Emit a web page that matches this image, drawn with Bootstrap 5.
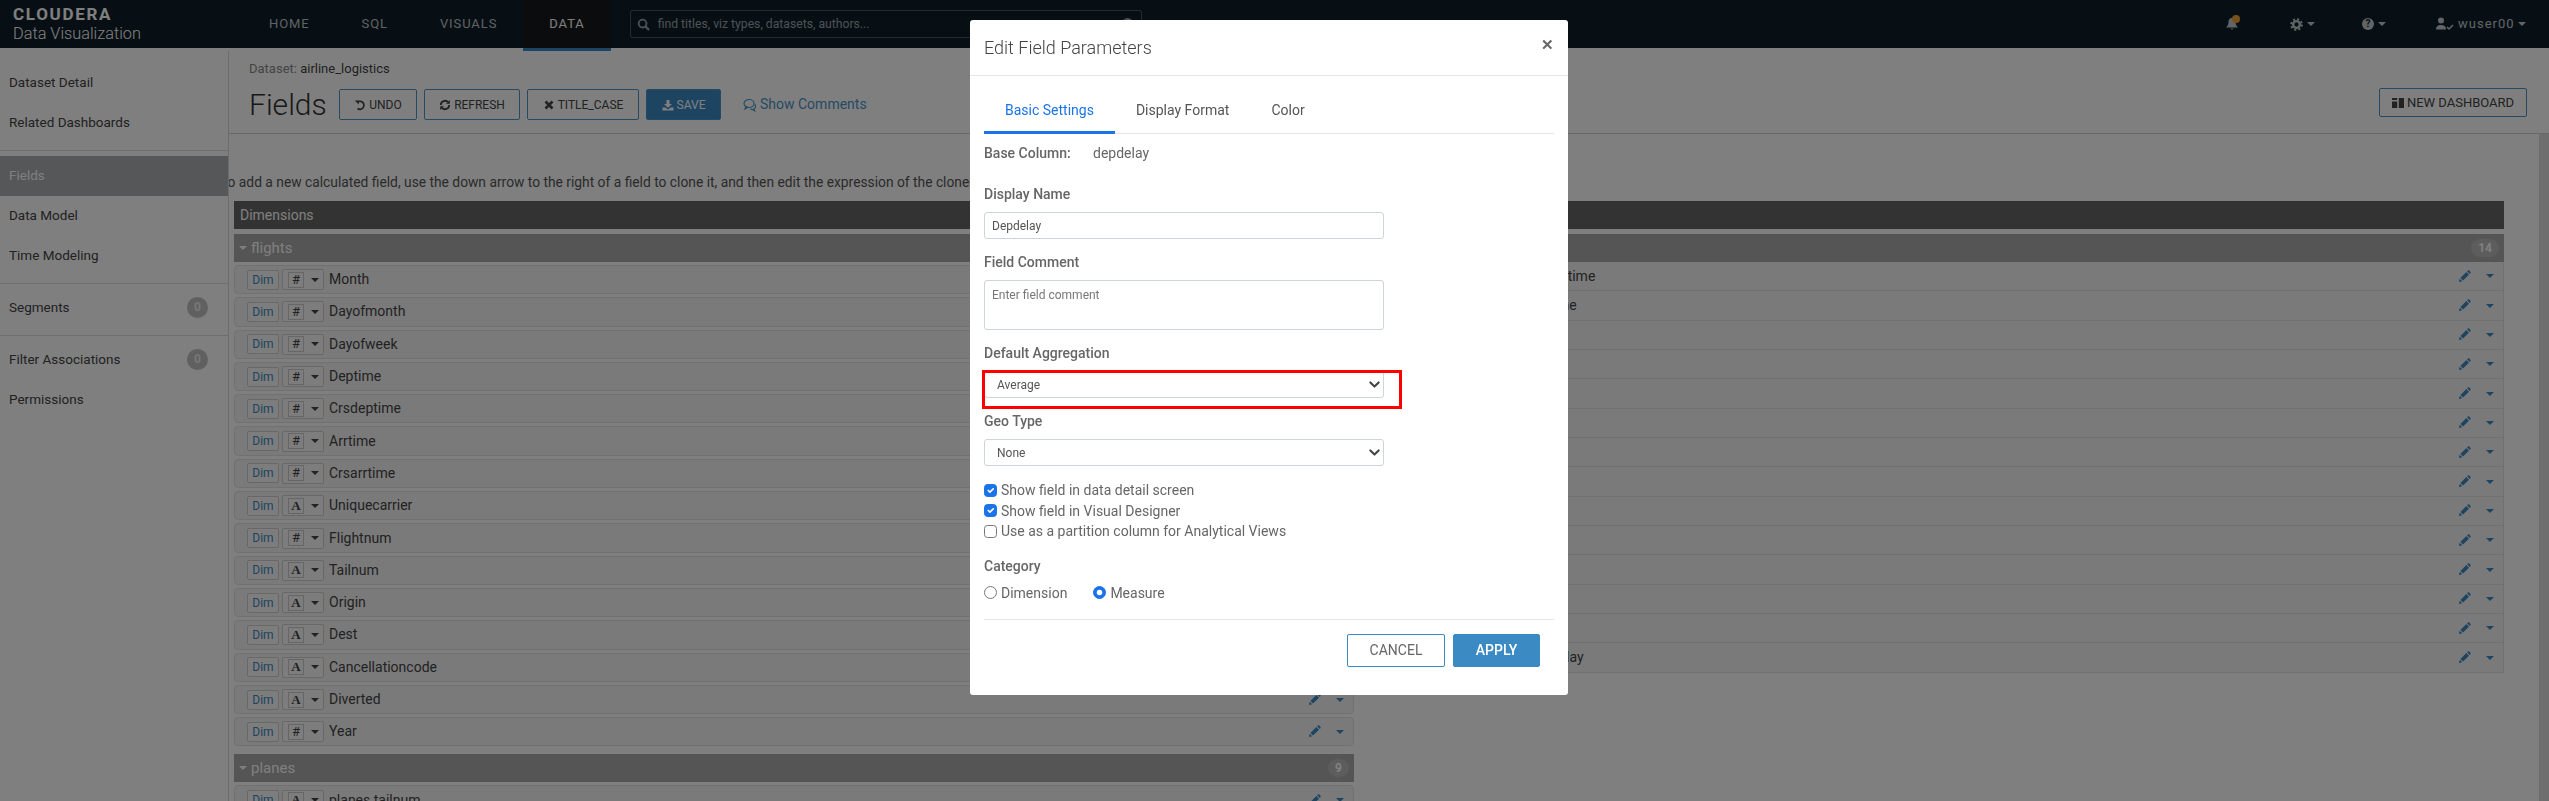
<!DOCTYPE html>
<html lang="en">
<head>
    <meta charset="UTF-8">
    <meta name="viewport" content="width=device-width, initial-scale=1.0">
    <title>Edit Field Parameters</title>
    <link href="https://cdn.jsdelivr.net/npm/bootstrap@5.3.0/dist/css/bootstrap.min.css" rel="stylesheet">
    <style>
        body {
            background: #fff;
            color: #333;
            font-family: Roboto, 'Liberation Sans', sans-serif;
            font-size: 14px;
            height: 801px;
            overflow: hidden;
        }
        .topBar { height: 48px; background: #0f1f29; flex: none; position: relative; z-index: 1; }
        .brand { width: 243px; padding-left: 13px; color: #fff; }
        .brandName { font-size: 17px; font-weight: 700; letter-spacing: 1.7px; line-height: 12px; padding-top: 3px; color: #fff; }
        .brandSub { font-size: 16.3px; font-weight: 300; line-height: 20px; margin-top: 4px; }
        .topLink { padding: 0 26px; line-height: 48px; color: #bfc5c9; font-size: 13px; letter-spacing: .9px; text-transform: uppercase; text-decoration: none; }
        .topLink.activeTop { background: #16191c; color: #fff; box-shadow: 0 3px 0 #3b8ac4; }
        .searchBox { width: 512px; height: 28px; margin-left: 19px; border: 1px solid #4a555c; border-radius: 2px; color: #9aa3a8; font-size: 12.2px; padding-left: 6px; position: relative; }
        .searchClear { position: absolute; right: 8px; top: 7px; width: 11px; height: 11px; border-radius: 50%; background: #9aa3a8; }
        .topIcons { color: #c3cbd0; margin-left: auto; }
        .topIcon { position: absolute; top: 0; height: 48px; display: flex; align-items: center; }
        .notifyDot { position: absolute; left: 7px; top: 15px; width: 8px; height: 8px; border-radius: 50%; background: #f0a032; }
        .helpDot { width: 12px; height: 12px; border-radius: 50%; background: #c3cbd0; color: #0f1f29; font-size: 10px; font-weight: 700; line-height: 12px; text-align: center; }
        .userName { font-size: 13px; letter-spacing: 1px; margin: 0 3px 0 4px; }
        .caretDown { display: inline-block; width: 0; height: 0; border-left: 4px solid transparent; border-right: 4px solid transparent; border-top: 4px solid currentColor; }

        .sideMenu { width: 229px; flex: none; border-right: 1px solid #d8d8d8; margin-top: 3px; padding-top: 12px; color: #555; }
        .sideGroup { padding-bottom: 7px; border-bottom: 1px solid #dcdcdc; margin-bottom: 4px; }
        .sideGroup:first-child { margin-bottom: 5px; }
        .sideLink { height: 40px; padding: 0 20px 1px 9px; display: flex; align-items: center; justify-content: space-between; color: #444; font-size: 13.5px; text-decoration: none; }
        .sideLink.activeSide { background: #aaafb3; color: #fff; }
        .sideCount { width: 21px; height: 21px; border-radius: 50%; background: #c0c0c0; color: #eee; font-size: 12px; font-weight: 700; text-align: center; line-height: 21px; }

        .pageHead { height: 86px; padding: 10px 22px 0 20px; border-bottom: 1px solid #d0d0d0; }
        .crumb { font-size: 13px; line-height: 20px; color: #888; padding-top: 1px; margin-bottom: -1px; }
        .crumb b { font-weight: 400; color: #444; }
        .titleRow { display: flex; align-items: center; gap: 7px; margin-top: 11px; }
        .pageTitle { font-size: 30px; font-weight: 300; line-height: 31px; width: 83px; color: #333; margin: 0; flex: none; }
        .outlineBtn { height: 31px; border: 1px solid #4c94c9; border-radius: 2px; background: transparent; color: #444; font-size: 12px; text-transform: uppercase; padding: 0; display: inline-flex; align-items: center; justify-content: center; gap: 3px; }
        .outlineBtn.fillBtn { background: #3b8ac4; color: #fff; }
        .undoBtn { width: 78px; }
        .refreshBtn { width: 96px; }
        .caseBtn { width: 112px; }
        .saveBtn { width: 75px; }
        .commentLink { color: #4c94c9; font-size: 14px; margin-left: 15px; display: inline-flex; align-items: center; gap: 3px; text-decoration: none; }
        .dashBtn { height: 29px; margin-top: -1px; font-size: 13px; width: 148px; }

        .scrollPane { height: 667px; overflow: hidden; }
        .fakeScroll { width: 10px; flex: none; background: #dcdcdc; }
        .helpLine { line-height: 20px; margin: 38px 0 9px -9px; font-size: 13.8px; white-space: nowrap; color: #555; }
        .fieldCols { display: grid; grid-template-columns: 1120fr 1135fr; column-gap: 15px; margin: 0 35px 0 5px; }
        .barDark { height: 28px; background: #666; color: #fff; font-size: 14px; line-height: 28px; padding-left: 6px; margin-bottom: 5px; }
        .barGroup { height: 28px; background: #aaa; color: #fff; font-size: 15px; padding: 0 5px; display: flex; align-items: center; gap: 4px; }
        .barCount { margin-left: auto; height: 18px; min-width: 21px; padding: 0 7px; border-radius: 9px; background: rgba(255,255,255,.2); font-size: 12px; font-weight: 700; line-height: 18px; text-align: center; }
        .fieldRow { height: 29.3px; margin-top: 3px; border: 1px solid #e2e2e2; border-radius: 4px; background: #f5f5f5; padding: 0 9px 0 12px; display: flex; align-items: center; color: #444; }
        .dimBtn { width: 32px; height: 20px; border: 1px solid #d0d0d0; border-radius: 2px; background: #fafafa; color: #3b8ac4; font-size: 12px; text-align: center; line-height: 18px; }
        .typeBtn { width: 42px; height: 21px; margin: 0 5px 0 3px; border: 1px solid #d0d0d0; border-radius: 2px; background: #fafafa; display: flex; align-items: center; padding-left: 5px; gap: 7px; color: #444; }
        .typeGlyph { width: 16px; height: 16px; border: 1px solid #ccc; text-align: center; font-size: 13px; line-height: 14px; }
        .typeGlyph.serif { font-family: 'Liberation Serif', serif; font-weight: 700; }
        .rowTools { margin-left: auto; display: flex; align-items: center; gap: 15px; color: #3b8ac4; }
        .plainRows .fieldRow { margin-top: 0; height: 29.35px; border-width: 0 1px 1px 1px; border-radius: 0; padding-left: 27px; }

        .editModal { padding-right: 11px; }
        .editDialog { max-width: 598px; margin: 20px auto 0; }
        .editContent { border: 0; border-radius: 3px; color: #666; }
        .editHeader { height: 56px; padding: 0 14px; border-bottom: 1px solid #e5e5e5; display: flex; align-items: center; justify-content: space-between; }
        .editTitle { font-size: 18px; font-weight: 300; color: #444; margin: 0; }
        .closeMark { font-size: 15px; font-weight: 700; color: #666; margin-top: -4px; line-height: 1; }
        .editBody { padding: 11px 14px 0; }
        .editTabs { border-bottom: 1px solid #e5e5e5; height: 47px; }
        .editTabs .nav-link { padding: 0 21px; line-height: 46px; height: 47px; border: 0; border-radius: 0; color: #555; background: none; }
        .editTabs .nav-link.active { color: #1a73e8; box-shadow: inset 0 -3px 0 #1a73e8; }
        .baseLine { line-height: 20px; margin-top: 9px; }
        .baseLine span { display: inline-block; width: 109px; font-weight: 500; }
        .fieldLabel { display: block; font-weight: 500; line-height: 20px; margin: 13px 0 8px; color: #666; }
        .baseLine + .fieldLabel { margin-top: 21px; }
        .fieldLabel.tightLabel { margin: 14px 0 7px; }
        .editInput { height: 27px; width: 400px; padding: 0 7px; border: 1px solid #ced4da; border-radius: 3px; font-size: 12px; color: #555; box-shadow: none; }
        .editText { height: 50px; padding: 5px 7px; resize: none; }
        .editText::placeholder { color: #777; }
        .editSelect { height: 27px; width: 400px; padding: 0 7px 0 12px; border: 1px solid #ced4da; border-radius: 3px; font-size: 12px; color: #555;
            background-image: url("data:image/svg+xml,%3csvg xmlns='http://www.w3.org/2000/svg' viewBox='0 0 16 16'%3e%3cpath fill='none' stroke='%23444' stroke-linecap='round' stroke-linejoin='round' stroke-width='3' d='m2 5 6 6 6-6'/%3e%3c/svg%3e");
            background-position: right 3px center; background-size: 11px 11px; }
        .redWrap { width: 400px; position: relative; }
        .redBox { position: absolute; left: -2px; right: -18px; top: -1px; bottom: -11px; border: 3px solid #f00; pointer-events: none; }
        .checkList { margin-top: 14px; }
        .checkItem { min-height: 0; height: 20.5px; padding-left: 17px; margin: 0; line-height: 20px; display: flex; align-items: center; }
        .checkItem .form-check-input { width: 13px; height: 13px; margin: 0 0 0 -17px; float: none; flex: none; border-color: #777; }
        .checkItem .form-check-input:checked { background-color: #1a73e8; border-color: #1a73e8; }
        .radioGap { margin-right: 26px; }
        .editFoot { margin-top: 16px; padding: 14px 14px 28px 0; border-top: 1px solid #e5e5e5; }
        .editBtn { height: 33px; border-radius: 2px; text-transform: uppercase; font-size: 14px; border: 1px solid #3b8ac4; padding: 0; }
        .cancelBtn { width: 98px; background: #fff; color: #666; }
        .applyBtn { width: 87px; background: #3b8ac4; color: #fff; font-weight: 500; }
    </style>
</head>
<body>
<svg class="d-none">
    <symbol id="i-search" viewBox="0 0 14 14"><circle cx="6" cy="6" r="4.2" fill="none" stroke="currentColor" stroke-width="2"/><path d="M9 9l4 4" stroke="currentColor" stroke-width="2.4"/></symbol>
    <symbol id="i-bell" viewBox="0 0 14 14"><path d="M7 1C4.5 1 3.5 3 3.5 5c0 3-1.5 4.500-2.500 5.500h12C12 9.500 10.500 8 10.500 5 10.500 3 9.500 1 7 1zM5.500 11.500a1.600 1.600 0 0 0 3 0z" fill="currentColor"/></symbol>
    <symbol id="i-cog" viewBox="0 0 14 14"><circle cx="7" cy="7" r="3.600" fill="none" stroke="currentColor" stroke-width="2.600"/><circle cx="7" cy="7" r="5.800" fill="none" stroke="currentColor" stroke-width="2" stroke-dasharray="2.300 2.250"/></symbol>
    <symbol id="i-user" viewBox="0 0 18 14"><circle cx="5" cy="3.500" r="3" fill="currentColor"/><path d="M0 12.500c0-3 1.500-4.500 5-4.500s5 1.500 5 4.500z" fill="currentColor"/><path d="M11 10l2 2 4-4" fill="none" stroke="currentColor" stroke-width="1.500"/></symbol>
    <symbol id="i-undo" viewBox="0 0 12 12"><path d="M3 3.500A4 4 0 1 1 3.500 9.500" fill="none" stroke="currentColor" stroke-width="1.800"/><path d="M.8 1.500h4v4z" fill="currentColor"/></symbol>
    <symbol id="i-refresh" viewBox="0 0 12 12"><path d="M1.800 6a4.200 4.200 0 0 1 7.300-2.800M10.200 6a4.200 4.200 0 0 1-7.300 2.800" fill="none" stroke="currentColor" stroke-width="1.800"/><path d="M10.800 1v3.800H7zM1.200 11V7.200H5z" fill="currentColor"/></symbol>
    <symbol id="i-remove" viewBox="0 0 12 12"><path d="M2.500 2.500l7 7M9.500 2.500l-7 7" stroke="currentColor" stroke-width="2.600"/></symbol>
    <symbol id="i-save" viewBox="0 0 12 12"><path d="M4.500 1h3v4h2.500L6 8.800 2 5h2.500z" fill="currentColor"/><path d="M.5 8.500h2.800L6 10.500l2.700-2h2.800V11.500H.5z" fill="currentColor"/></symbol>
    <symbol id="i-comments" viewBox="0 0 14 14"><ellipse cx="6" cy="5.500" rx="5" ry="4" fill="none" stroke="currentColor" stroke-width="1.200"/><path d="M3 8.500L2 11l3-1.700" fill="none" stroke="currentColor" stroke-width="1.200"/><path d="M11.800 6.500c1.500 1.800.5 4-1.200 4.500l1 1.800-3-1.500H7.500" fill="none" stroke="currentColor" stroke-width="1.200"/></symbol>
    <symbol id="i-dash" viewBox="0 0 12 12"><path d="M0 1h5.200v2H0zM6.800 1H12v10H6.800zM0 4.500h5.200V11H0z" fill="currentColor"/></symbol>
    <symbol id="i-pencil" viewBox="0 0 14 14"><path d="M1 13l.8-3.600 2.800 2.800z" fill="currentColor"/><path d="M2.600 8.600L9 2.200l2.800 2.800-6.400 6.400zM9.800 1.400l.8-.8c.4-.4 1-.4 1.400 0l1.400 1.400c.4.400.4 1 0 1.400l-.8.8z" fill="currentColor"/></symbol>
</svg>

<div class="d-flex flex-column">
    <nav class="topBar d-flex align-items-center">
        <div class="brand">
            <div class="brandName">CLOUDERA</div>
            <div class="brandSub">Data Visualization</div>
        </div>
        <a class="topLink" href="#">Home</a>
        <a class="topLink" href="#">SQL</a>
        <a class="topLink" href="#">Visuals</a>
        <a class="topLink activeTop" href="#">Data</a>
        <div class="searchBox d-flex align-items-center gap-2">
            <svg width="13" height="13"><use href="#i-search"/></svg>
            <span>find titles, viz types, datasets, authors...</span>
            <span class="searchClear"></span>
        </div>
        <div class="topIcons">
            <span class="topIcon" style="left:2225px"><svg width="14" height="14"><use href="#i-bell"/></svg><span class="notifyDot"></span></span>
            <span class="topIcon gap-1" style="left:2290px"><svg width="13" height="13"><use href="#i-cog"/></svg><span class="caretDown"></span></span>
            <span class="topIcon gap-1" style="left:2362px"><span class="helpDot">?</span><span class="caretDown"></span></span>
            <span class="topIcon" style="left:2436px"><svg width="18" height="14"><use href="#i-user"/></svg><span class="userName">wuser00</span><span class="caretDown"></span></span>
        </div>
    </nav>

    <div class="d-flex">
        <aside class="sideMenu">
            <div class="sideGroup">
                <a class="sideLink" href="#">Dataset Detail</a>
                <a class="sideLink" href="#">Related Dashboards</a>
            </div>
            <div class="sideGroup">
                <a class="sideLink activeSide" href="#">Fields</a>
                <a class="sideLink" href="#">Data Model</a>
                <a class="sideLink" href="#">Time Modeling</a>
            </div>
            <div class="sideGroup">
                <a class="sideLink" href="#">Segments <span class="sideCount">0</span></a>
            </div>
            <a class="sideLink" href="#">Filter Associations <span class="sideCount">0</span></a>
            <a class="sideLink" href="#">Permissions</a>
        </aside>

        <main class="flex-grow-1 overflow-hidden">
            <header class="pageHead d-flex justify-content-between">
                <div>
                    <div class="crumb">Dataset: <b>airline_logistics</b></div>
                    <div class="titleRow">
                        <h1 class="pageTitle">Fields</h1>
                        <button class="outlineBtn undoBtn"><svg width="12" height="12"><use href="#i-undo"/></svg>Undo</button>
                        <button class="outlineBtn refreshBtn"><svg width="12" height="12"><use href="#i-refresh"/></svg>Refresh</button>
                        <button class="outlineBtn caseBtn"><svg width="12" height="12"><use href="#i-remove"/></svg>Title_Case</button>
                        <button class="outlineBtn fillBtn saveBtn"><svg width="12" height="12"><use href="#i-save"/></svg>Save</button>
                        <a class="commentLink" href="#"><svg width="14" height="14"><use href="#i-comments"/></svg>Show Comments</a>
                    </div>
                </div>
                <div class="align-self-end mb-3">
                    <button class="outlineBtn dashBtn"><svg width="12" height="12"><use href="#i-dash"/></svg>New Dashboard</button>
                </div>
            </header>
            <div class="d-flex scrollPane">
                <div class="flex-grow-1 overflow-hidden">
                    <p class="helpLine">To add a new calculated field, use the down arrow to the right of a field to clone it, and then edit the expression of the cloned field.</p>
                    <div class="fieldCols">
                        <section>
                            <div class="barDark">Dimensions</div>
                            <div class="barGroup"><span class="caretDown"></span>flights<span class="barCount">15</span></div>
                            <div id="dimRows"></div>
                            <div class="barGroup mt-2">
                                <span class="caretDown"></span>planes<span class="barCount">9</span>
                            </div>
                            <div id="planeRows"></div>
                        </section>
                        <section>
                            <div class="barDark">Measures</div>
                            <div class="barGroup"><span class="caretDown"></span>flights<span class="barCount">14</span></div>
                            <div id="measureRows" class="plainRows"></div>
                        </section>
                    </div>
                </div>
                <div class="fakeScroll"></div>
            </div>
        </main>
    </div>
</div>

<div class="modal-backdrop show"></div>
<div class="modal d-block editModal">
    <div class="modal-dialog editDialog">
        <div class="modal-content editContent">
            <div class="editHeader">
                <h5 class="editTitle">Edit Field Parameters</h5>
                <span class="closeMark">&#10005;</span>
            </div>
            <div class="editBody">
                <ul class="nav editTabs">
                    <li class="nav-item"><a class="nav-link active" href="#">Basic Settings</a></li>
                    <li class="nav-item"><a class="nav-link" href="#">Display Format</a></li>
                    <li class="nav-item"><a class="nav-link" href="#">Color</a></li>
                </ul>
                <div class="baseLine"><span>Base Column:</span>depdelay</div>
                <label class="fieldLabel">Display Name</label>
                <input class="form-control editInput" type="text" value="Depdelay">
                <label class="fieldLabel">Field Comment</label>
                <textarea class="form-control editInput editText" placeholder="Enter field comment"></textarea>
                <label class="fieldLabel">Default Aggregation</label>
                <div class="redWrap">
                    <select class="form-select editSelect"><option>Average</option></select>
                    <div class="redBox"></div>
                </div>
                <label class="fieldLabel">Geo Type</label>
                <select class="form-select editSelect"><option>None</option></select>
                <div class="checkList">
                    <div class="form-check checkItem"><input class="form-check-input" type="checkbox" checked><label class="ms-1">Show field in data detail screen</label></div>
                    <div class="form-check checkItem"><input class="form-check-input" type="checkbox" checked><label class="ms-1">Show field in Visual Designer</label></div>
                    <div class="form-check checkItem"><input class="form-check-input" type="checkbox"><label class="ms-1">Use as a partition column for Analytical Views</label></div>
                </div>
                <label class="fieldLabel tightLabel">Category</label>
                <div class="d-flex">
                    <div class="form-check checkItem radioGap"><input class="form-check-input" type="radio" name="cat"><label class="ms-1">Dimension</label></div>
                    <div class="form-check checkItem"><input class="form-check-input" type="radio" name="cat" checked><label class="ms-1">Measure</label></div>
                </div>
                <div class="editFoot d-flex justify-content-end gap-2">
                    <button class="editBtn cancelBtn">Cancel</button>
                    <button class="editBtn applyBtn">Apply</button>
                </div>
            </div>
        </div>
    </div>
</div>

<script>
    var tools = '<span class="rowTools"><svg width="13" height="13"><use href="#i-pencil"/></svg><span class="caretDown"></span></span>';

    function fieldRow(name, type, plain) {
        var glyph = type === "A" ? '<span class="typeGlyph serif">A</span>' : '<span class="typeGlyph">#</span>';
        return '<div class="fieldRow"><span class="dimBtn">' + (plain ? "Mes" : "Dim") + '</span>' +
            '<span class="typeBtn">' + glyph + '<span class="caretDown"></span></span>' +
            '<span>' + name + '</span>' + tools + '</div>';
    }

    var dims = [["Month","#"],["Dayofmonth","#"],["Dayofweek","#"],["Deptime","#"],["Crsdeptime","#"],["Arrtime","#"],["Crsarrtime","#"],
        ["Uniquecarrier","A"],["Flightnum","#"],["Tailnum","A"],["Origin","A"],["Dest","A"],["Cancellationcode","A"],["Diverted","A"],["Year","#"]];
    var measures = ["Actualelapsedtime","Crselapsedtime","Airtime","Arrdelay","Depdelay","Distance","Taxiin","Taxiout","Cancelled",
        "Carrierdelay","Weatherdelay","Nasdelay","Securitydelay","Lateaircraftdelay"];

    document.getElementById("dimRows").innerHTML = dims.map(function (d) { return fieldRow(d[0], d[1]); }).join("");
    document.getElementById("planeRows").innerHTML = fieldRow("planes tailnum", "A");
    document.getElementById("measureRows").innerHTML = measures.map(function (m) { return fieldRow(m, "#", true); }).join("");
</script>
<script src="https://cdn.jsdelivr.net/npm/bootstrap@5.3.0/dist/js/bootstrap.bundle.min.js"></script>
</body>
</html>
